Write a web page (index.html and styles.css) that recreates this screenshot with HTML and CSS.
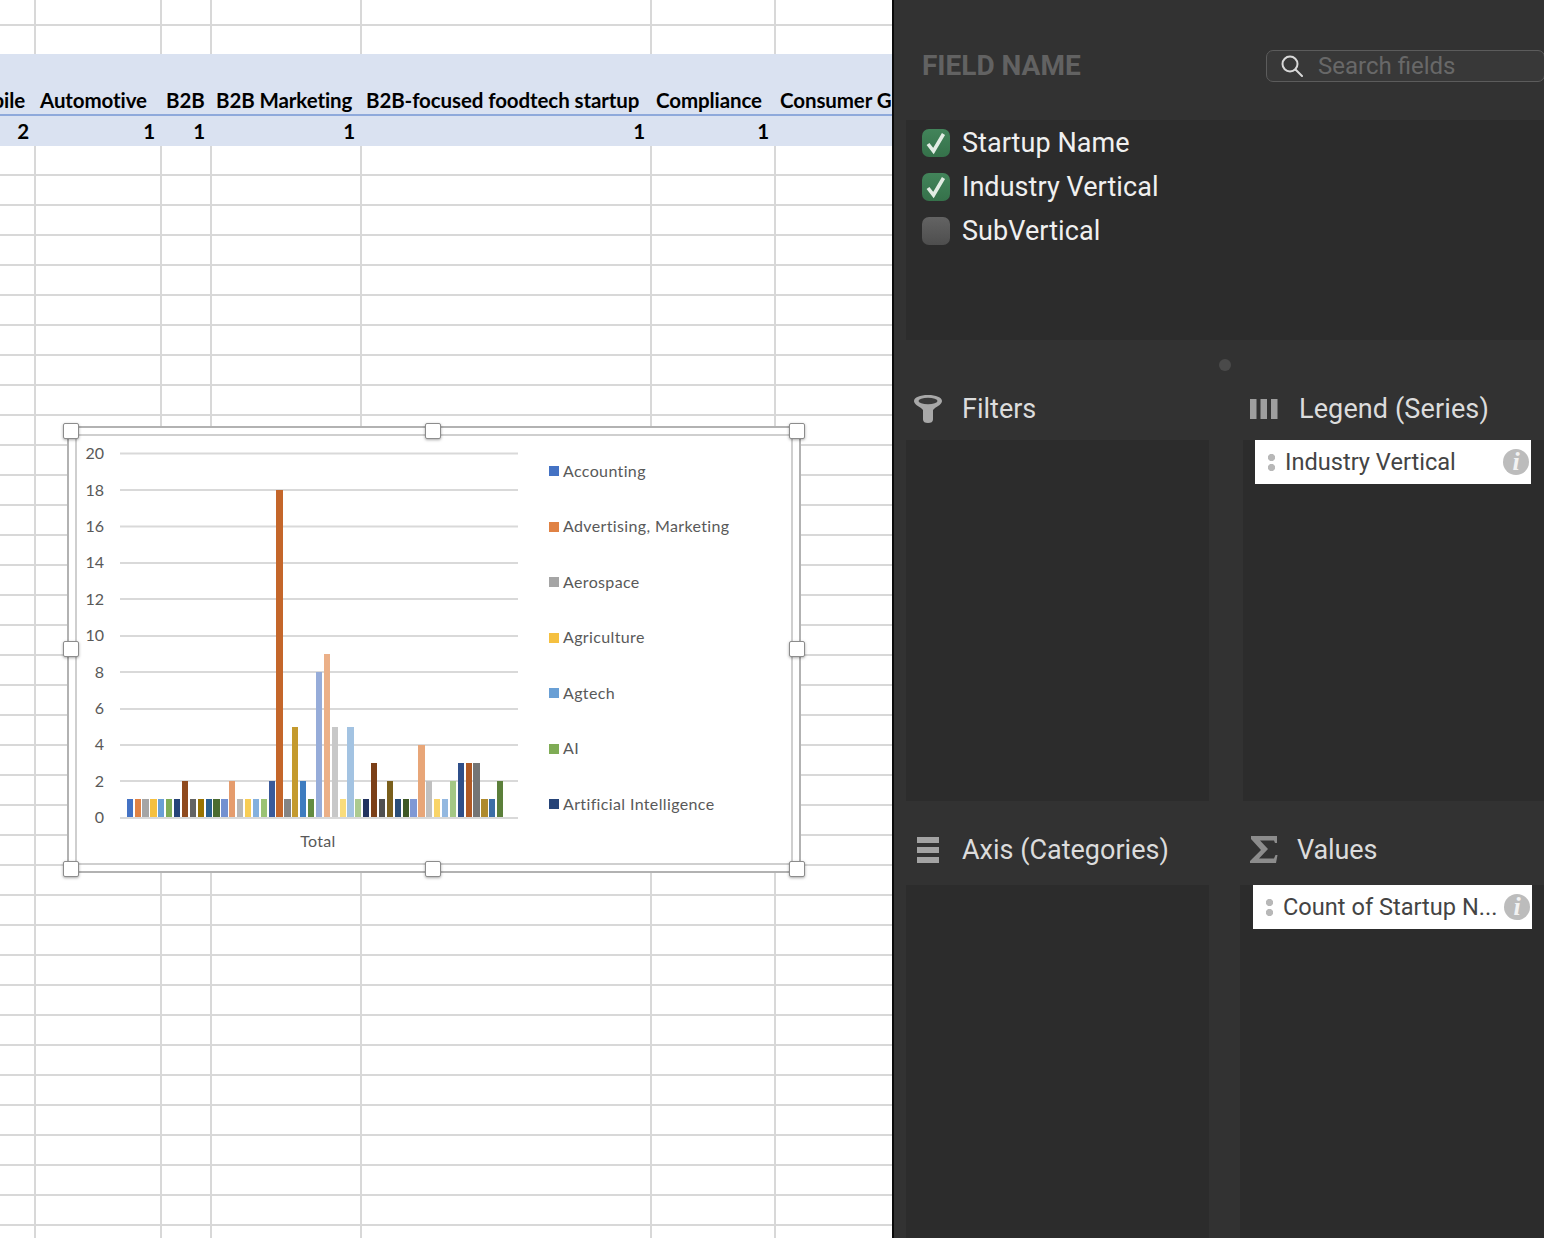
FILE: index.html
```html
<!doctype html>
<html lang="en">
<head>
<meta charset="UTF-8">
<title>PivotChart Fields</title>
<link rel="stylesheet" href="styles.css">
</head>
<body>
<div class="window">

  <!-- worksheet -->
  <div class="sheet">
    <div class="band">
      <div class="band-row head-row">
        <div class="cell cell-end">Automobile</div>
        <div class="cell">Automotive</div>
        <div class="cell">B2B</div>
        <div class="cell">B2B Marketing</div>
        <div class="cell">B2B-focused foodtech startup</div>
        <div class="cell">Compliance</div>
        <div class="cell">Consumer G</div>
      </div>
      <div class="band-row value-row">
        <div class="cell cell-end">2</div>
        <div class="cell cell-end">1</div>
        <div class="cell cell-end">1</div>
        <div class="cell cell-end">1</div>
        <div class="cell cell-end">1</div>
        <div class="cell cell-end">1</div>
        <div class="cell cell-end"></div>
      </div>
    </div>

    <!-- chart floats over the cells -->
    <div class="chart-frame">
      <div class="chart-inner">
        <svg class="chart" width="714" height="427" viewBox="77 436 714 427">
          <g class="grid-lines">
            <line x1="120" x2="518" y1="453.5" y2="453.5"/>
            <line x1="120" x2="518" y1="490" y2="490"/>
            <line x1="120" x2="518" y1="526.5" y2="526.5"/>
            <line x1="120" x2="518" y1="563" y2="563"/>
            <line x1="120" x2="518" y1="599" y2="599"/>
            <line x1="120" x2="518" y1="636" y2="636"/>
            <line x1="120" x2="518" y1="672" y2="672"/>
            <line x1="120" x2="518" y1="709" y2="709"/>
            <line x1="120" x2="518" y1="745" y2="745"/>
            <line x1="120" x2="518" y1="781" y2="781"/>
            <line x1="120" x2="518" y1="818" y2="818"/>
          </g>
          <g class="axis-labels">
            <text x="104" y="459">20</text>
            <text x="104" y="496">18</text>
            <text x="104" y="532">16</text>
            <text x="104" y="568">14</text>
            <text x="104" y="605">12</text>
            <text x="104" y="641">10</text>
            <text x="104" y="678">8</text>
            <text x="104" y="714">6</text>
            <text x="104" y="750">4</text>
            <text x="104" y="787">2</text>
            <text x="104" y="823">0</text>
          </g>
          <g>
            <rect x="127" y="799" width="6" height="18" fill="#4472c4"/>
            <rect x="135" y="799" width="6" height="18" fill="#e08244"/>
            <rect x="142" y="799" width="7" height="18" fill="#a5a5a5"/>
            <rect x="150" y="799" width="7" height="18" fill="#f5c040"/>
            <rect x="158" y="799" width="6" height="18" fill="#699fd5"/>
            <rect x="166" y="799" width="6" height="18" fill="#7fac55"/>
            <rect x="174" y="799" width="6" height="18" fill="#264478"/>
            <rect x="182" y="781" width="6" height="36" fill="#8f4a1e"/>
            <rect x="190" y="799" width="6" height="18" fill="#636363"/>
            <rect x="198" y="799" width="6" height="18" fill="#997300"/>
            <rect x="206" y="799" width="6" height="18" fill="#2a5f8f"/>
            <rect x="213" y="799" width="7" height="18" fill="#4b6b30"/>
            <rect x="221" y="799" width="7" height="18" fill="#7390d0"/>
            <rect x="229" y="781" width="6" height="36" fill="#e59c6d"/>
            <rect x="237" y="799" width="6" height="18" fill="#b7b7b7"/>
            <rect x="245" y="799" width="6" height="18" fill="#f8cd55"/>
            <rect x="253" y="799" width="6" height="18" fill="#84b0dd"/>
            <rect x="261" y="799" width="6" height="18" fill="#9bc274"/>
            <rect x="269" y="781" width="6" height="36" fill="#3a5a9b"/>
            <rect x="276" y="490" width="7" height="327" fill="#c4662a"/>
            <rect x="284" y="799" width="7" height="18" fill="#848484"/>
            <rect x="292" y="727" width="6" height="90" fill="#c49a2e"/>
            <rect x="300" y="781" width="6" height="36" fill="#3e7cbf"/>
            <rect x="308" y="799" width="6" height="18" fill="#638b40"/>
            <rect x="316" y="672" width="6" height="145" fill="#96acd9"/>
            <rect x="324" y="654" width="6" height="163" fill="#ebb088"/>
            <rect x="332" y="727" width="6" height="90" fill="#c8c8c8"/>
            <rect x="340" y="799" width="6" height="18" fill="#f9dc7c"/>
            <rect x="347" y="727" width="7" height="90" fill="#a3c3e2"/>
            <rect x="355" y="799" width="6" height="18" fill="#acca8f"/>
            <rect x="363" y="799" width="6" height="18" fill="#22335f"/>
            <rect x="371" y="763" width="6" height="54" fill="#7b3f17"/>
            <rect x="379" y="799" width="6" height="18" fill="#505050"/>
            <rect x="387" y="781" width="6" height="36" fill="#7a5f1c"/>
            <rect x="395" y="799" width="6" height="18" fill="#2a4e78"/>
            <rect x="403" y="799" width="6" height="18" fill="#3e5825"/>
            <rect x="410" y="799" width="7" height="18" fill="#7f98d4"/>
            <rect x="418" y="745" width="7" height="72" fill="#e8a678"/>
            <rect x="426" y="781" width="6" height="36" fill="#c0c0c0"/>
            <rect x="434" y="799" width="6" height="18" fill="#f9d468"/>
            <rect x="442" y="799" width="6" height="18" fill="#93b8e0"/>
            <rect x="450" y="781" width="6" height="36" fill="#a3c784"/>
            <rect x="458" y="763" width="6" height="54" fill="#2f4f8a"/>
            <rect x="466" y="763" width="6" height="54" fill="#b05a25"/>
            <rect x="473" y="763" width="7" height="54" fill="#757575"/>
            <rect x="481" y="799" width="7" height="18" fill="#ae8a2d"/>
            <rect x="489" y="799" width="6" height="18" fill="#3c6ea6"/>
            <rect x="497" y="781" width="6" height="36" fill="#5b7f3a"/>
          </g>
          <text class="axis-title" x="318" y="847">Total</text>
          <g class="legend">
            <rect x="549" y="466" width="10" height="10" fill="#4472c4"/>
            <text x="563" y="477">Accounting</text>
            <rect x="549" y="522" width="10" height="10" fill="#e08244"/>
            <text x="563" y="532">Advertising, Marketing</text>
            <rect x="549" y="577" width="10" height="10" fill="#a5a5a5"/>
            <text x="563" y="588">Aerospace</text>
            <rect x="549" y="633" width="10" height="10" fill="#f5c040"/>
            <text x="563" y="643">Agriculture</text>
            <rect x="549" y="688" width="10" height="10" fill="#699fd5"/>
            <text x="563" y="699">Agtech</text>
            <rect x="549" y="744" width="10" height="10" fill="#7fac55"/>
            <text x="563" y="754">AI</text>
            <rect x="549" y="799" width="10" height="10" fill="#264478"/>
            <text x="563" y="810">Artificial Intelligence</text>
          </g>
        </svg>
      </div>
      <span class="handle h-tl"></span>
      <span class="handle h-tc"></span>
      <span class="handle h-tr"></span>
      <span class="handle h-ml"></span>
      <span class="handle h-mr"></span>
      <span class="handle h-bl"></span>
      <span class="handle h-bc"></span>
      <span class="handle h-br"></span>
    </div>
  </div>

  <!-- field pane -->
  <div class="pane">
    <div class="pane-head">
      <div class="pane-title">FIELD NAME</div>
      <div class="search">
        <svg width="22" height="22" viewBox="0 0 22 22" fill="none" stroke="#d8d8d8" stroke-width="2">
          <circle cx="9" cy="9" r="7.500"/>
          <path d="M14.500 14.500l6.500 6.500" stroke-linecap="round"/>
        </svg>
        <span>Search fields</span>
      </div>
    </div>

    <div class="field-list">
      <div class="field">
        <span class="check on">
          <svg width="28" height="28" viewBox="0 0 28 28" fill="none" stroke="#e2ece4" stroke-width="3.600"><path d="M6 15l5.500 7L21.500 5"/></svg>
        </span>
        Startup Name
      </div>
      <div class="field">
        <span class="check on">
          <svg width="28" height="28" viewBox="0 0 28 28" fill="none" stroke="#e2ece4" stroke-width="3.600"><path d="M6 15l5.500 7L21.500 5"/></svg>
        </span>
        Industry Vertical
      </div>
      <div class="field">
        <span class="check"></span>
        SubVertical
      </div>
    </div>

    <div class="sash"><span class="sash-dot"></span></div>

    <div class="areas">
      <div class="area">
        <div class="area-head">
          <svg class="icon-funnel" width="30" height="28" viewBox="0 0 30 28">
            <path d="M1 6C1 2.500 7 0 15 0s14 2.500 14 6c0 3-4 5-7 7l-2 2v9.500c0 2.500-2 3.500-5 3.500s-5-1-5-3.500V15l-2-2C5 11 1 9 1 6z" fill="#a8a8a8"/>
            <ellipse cx="15" cy="6" rx="9.500" ry="3.200" fill="#3a3a3a"/>
          </svg>
          <span class="area-name filters-name">Filters</span>
        </div>
        <div class="area-box"></div>
      </div>
      <div class="area area-right">
        <div class="area-head">
          <svg width="28" height="20" viewBox="0 0 28 20" fill="#9e9e9e">
            <rect x="0" y="0" width="6.500" height="20"/>
            <rect x="10.500" y="0" width="6.500" height="20"/>
            <rect x="21" y="0" width="6.500" height="20"/>
          </svg>
          <span class="area-name legend-name">Legend (Series)</span>
        </div>
        <div class="area-box">
          <div class="pill pill-legend">
            <span class="grip"></span>
            <span class="pill-text">Industry Vertical</span>
            <span class="info">i</span>
          </div>
        </div>
      </div>
      <div class="area area-low">
        <div class="area-head">
          <svg class="icon-rows" width="22" height="26" viewBox="0 0 22 26" fill="#a3a3a3">
            <rect x="0" y="0" width="22" height="6"/>
            <rect x="0" y="10" width="22" height="6"/>
            <rect x="0" y="20" width="22" height="6"/>
          </svg>
          <span class="area-name">Axis (Categories)</span>
        </div>
        <div class="area-box"></div>
      </div>
      <div class="area area-low area-values">
        <div class="area-head">
          <svg class="icon-sigma" width="28" height="28" viewBox="0 0 28 28" fill="#8c8c8c">
            <path d="M1 0H27V7H25L24 4.500H10L18 13L9 22.500H24L25.500 19H27.500L26 27H0V25L11 14L1 3z"/>
          </svg>
          <span class="area-name values-name">Values</span>
        </div>
        <div class="area-box">
          <div class="pill pill-values">
            <span class="grip"></span>
            <span class="pill-text">Count of Startup N...</span>
            <span class="info">i</span>
          </div>
        </div>
      </div>
    </div>
  </div>

</div>
</body>
</html>
```

FILE: styles.css
```css
html,body{ margin:0;padding:0;height:100%;overflow:hidden; }
body{ background:#fff;font-family:"Lato","Liberation Sans",sans-serif; }
.window{ display:flex;height:1238px; }

/* worksheet */
.sheet{
	position:relative;width:892px;flex:none;overflow:hidden;padding-top:54px;box-sizing:border-box;
	background-color:#fff;
	background-image:
		linear-gradient(#d8d8d8,#d8d8d8),linear-gradient(#d8d8d8,#d8d8d8),linear-gradient(#d8d8d8,#d8d8d8),
		linear-gradient(#d8d8d8,#d8d8d8),linear-gradient(#d8d8d8,#d8d8d8),linear-gradient(#d8d8d8,#d8d8d8),
		repeating-linear-gradient(to bottom,transparent 0,transparent 24px,#d8d8d8 24px,#d8d8d8 26px,transparent 26px,transparent 30px);
	background-size:2px 100%,2px 100%,2px 100%,2px 100%,2px 100%,2px 100%,100% 100%;
	background-position:34px 0,160px 0,210px 0,360px 0,650px 0,774px 0,0 0;
	background-repeat:no-repeat;
}
.band{ background:#dae2f1; }
.band-row{ display:grid;grid-template-columns:35px 126px 50px 150px 290px 124px 117px; }
.head-row{ height:60px;border-bottom:2px solid #8ea9db;align-items:end; }
.value-row{ height:30px;align-items:center; }
.cell{ display:flex;overflow:hidden;white-space:nowrap;padding-left:5px;font-size:20.5px;font-weight:700;line-height:28px;color:#000;letter-spacing:-0.1px;box-sizing:border-box; }
.cell-end{ justify-content:flex-end;padding:0 6px 1px 0; }
.head-row .cell-end{ padding:0 10px 0 0; }

/* chart */
.chart-frame{ position:absolute;left:67px;top:426px;width:734px;height:447px;box-sizing:border-box;border:2px solid #b2b2b2;background:#fff;padding:6px; }
.chart-inner{ width:718px;height:431px;box-sizing:border-box;border:2px solid #cfcfcf;background:#fff; }
.chart{ display:block; }
.grid-lines line{ stroke:#d9d9d9;stroke-width:2; }
.axis-labels text{ font-size:16px;text-anchor:end;fill:#595959;font-family:"Lato",sans-serif; }
.axis-title{ font-size:16px;letter-spacing:.3px;text-anchor:middle;fill:#595959; }
.legend text{ font-size:16px;letter-spacing:.36px;fill:#595959; }
.handle{ position:absolute;width:14px;height:14px;background:#fff;border:1px solid #8c8c8c;border-radius:2px;box-shadow:0 1px 3px rgba(0,0,0,.35); }
.h-tl{ left:-6px;top:-5px; }
.h-tc{ left:356px;top:-5px; }
.h-tr{ left:720px;top:-5px; }
.h-ml{ left:-6px;top:213px; }
.h-mr{ left:720px;top:213px; }
.h-bl{ left:-6px;top:433px; }
.h-bc{ left:356px;top:433px; }
.h-br{ left:720px;top:433px; }

/* field pane */
.pane{ flex:1;min-width:0;display:flex;flex-direction:column;background:#323232;border-left:2px solid #0a0a0a;padding-left:12px;font-family:"Roboto","Liberation Sans",sans-serif;color:#e4e4e4; }
.pane-head{ height:120px;flex:none;display:flex;align-items:flex-start;justify-content:space-between;padding-top:50px;box-sizing:border-box; }
.pane-title{ margin-left:16px;font-size:28px;font-weight:700;line-height:32px;color:#626262; }
.search{ width:279px;height:32px;box-sizing:border-box;margin-right:-1px;display:flex;align-items:center;gap:15px;padding-left:14px;border:1px solid #5c5c5c;border-radius:7px;background:#383838;font-size:24px;color:#686868; }

.field-list{ height:220px;flex:none;box-sizing:border-box;padding:1px 0 0 16px;background:#2c2c2c; }
.field{ height:44px;display:flex;align-items:center;gap:12px;font-size:27px;color:#f0f0f0;letter-spacing:.06px; }
.check{ width:28px;height:28px;flex:none;border-radius:7px;background:linear-gradient(#636363,#4e4e4e); }
.check.on{ background:linear-gradient(#42845a,#35714a); }
.check svg{ display:block; }

.sash{ height:50px;flex:none;display:flex;align-items:center;justify-content:center; }
.sash-dot{ width:12px;height:12px;border-radius:50%;background:#4a4a4a; }

.areas{ flex:1;display:grid;grid-template-columns:303px 1fr;grid-template-rows:411px 1fr;column-gap:34px; }
.area{ display:flex;flex-direction:column; }
.area-head{ height:50px;flex:none;display:flex;align-items:center;padding-bottom:12px;box-sizing:border-box; }
.area-low .area-head{ height:84px;padding-bottom:0;padding-top:14px; }
.area-box{ flex:1;background:#2c2c2c; }
.area-name{ font-size:27px;color:#dcdcdc;margin-left:20px; }
.filters-name{ margin-left:19px; }
.legend-name{ margin-left:21px;letter-spacing:.12px; }
.values-name{ margin-left:19px;letter-spacing:-.1px; }
.area-right .area-head svg{ margin-left:7px; }
.area-head .icon-funnel{ margin-left:7px; }
.area-head .icon-rows{ margin-left:11px;margin-right:3px; }
.area-values{ margin-left:-3px; }
.area-values .area-head svg{ margin-left:10px; }

.pill{ display:flex;align-items:center;height:44px;background:#fff;color:#444;font-size:23.6px; }
.pill-legend{ margin:0 13px 0 12px; }
.pill-values{ margin:0 12px 0 13px; }
.grip{ width:7px;height:17px;flex:none;margin-left:13px;margin-right:10px;background:radial-gradient(circle at 3.5px 3.5px,#b8b8b8 3.4px,transparent 3.8px),radial-gradient(circle at 3.5px 13.5px,#b8b8b8 3.4px,transparent 3.8px); }
.pill-text{ flex:1;white-space:nowrap;overflow:hidden; }
.info{ width:26px;height:26px;flex:none;margin-right:2px;border-radius:50%;background:#bcbcbc;color:#f2f2f2;font:italic 700 26px/26px "Liberation Serif",serif;text-align:center; }
```
